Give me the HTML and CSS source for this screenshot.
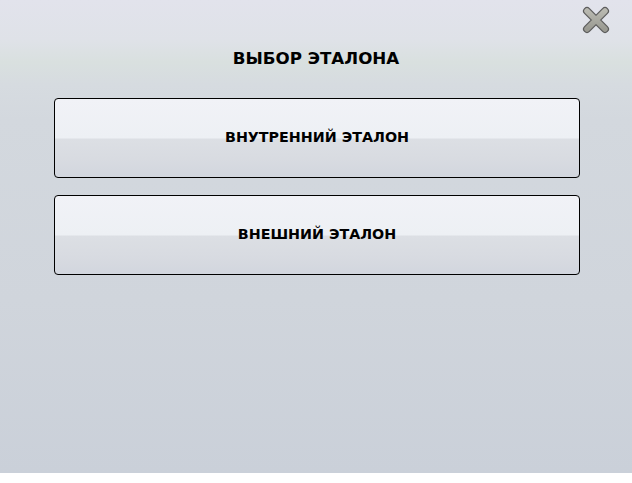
FILE: index.html
```html
<!DOCTYPE html>
<html lang="ru">
<head>
<meta charset="utf-8">
<link rel="stylesheet" href="styles.css">
</head>
<body>
<div class="panel">
  <button class="close" aria-label="Закрыть">
    <svg width="28" height="28" viewBox="0 0 28 28">
      <defs>
        <linearGradient id="xg" x1="0" y1="0" x2="0" y2="1">
          <stop offset="0" stop-color="#b8b8b0"/>
          <stop offset="1" stop-color="#9a9a92"/>
        </linearGradient>
      </defs>
      <path d="M5 5 L23 23 M23 5 L5 23" stroke="#5c5c5c" stroke-width="8" stroke-linecap="round"/>
      <path d="M5 5 L23 23 M23 5 L5 23" stroke="url(#xg)" stroke-width="5.5" stroke-linecap="round"/>
    </svg>
  </button>
  <h1 class="title">ВЫБОР ЭТАЛОНА</h1>
  <div class="options">
    <button class="option">ВНУТРЕННИЙ ЭТАЛОН</button>
    <button class="option">ВНЕШНИЙ ЭТАЛОН</button>
  </div>
</div>
</body>
</html>
```
FILE: styles.css
```css
html, body {
  margin: 0;
  padding: 0;
  background: #ffffff;
}
.panel {
  position: relative;
  width: 632px;
  height: 473px;
  box-sizing: border-box;
  padding-top: 48px;
  display: flex;
  flex-direction: column;
  font-family: "DejaVu Sans", Verdana, sans-serif;
  background: linear-gradient(to bottom,
    #e2e3ec 0px,
    #dfe2e8 40px,
    #d9e0df 62px,
    #d6dbe0 85px,
    #d3d8de 120px,
    #d0d5dc 300px,
    #cad0d9 473px);
}
.close {
  position: absolute;
  top: 6px;
  right: 22px;
  width: 28px;
  height: 28px;
  padding: 0;
  border: 0;
  background: none;
}
.close svg { display: block; }
.title {
  margin: 0;
  font-size: 16.7px;
  line-height: 20px;
  font-weight: bold;
  text-align: center;
  color: #000;
}
.options {
  margin: 30px 0 0 54px;
  width: 526px;
  display: flex;
  flex-direction: column;
  gap: 17px;
}
.option {
  height: 80px;
  border: 1px solid #000;
  border-radius: 4px;
  font-family: "DejaVu Sans", Verdana, sans-serif;
  font-size: 14.3px;
  font-weight: bold;
  color: #000;
  padding: 0 0 2px;
  background: linear-gradient(to bottom,
    #f1f2f7 0px,
    #edf0f4 39px,
    #dcdfe4 40px,
    #d8dbe1 60px,
    #d2d6de 78px);
}
```
